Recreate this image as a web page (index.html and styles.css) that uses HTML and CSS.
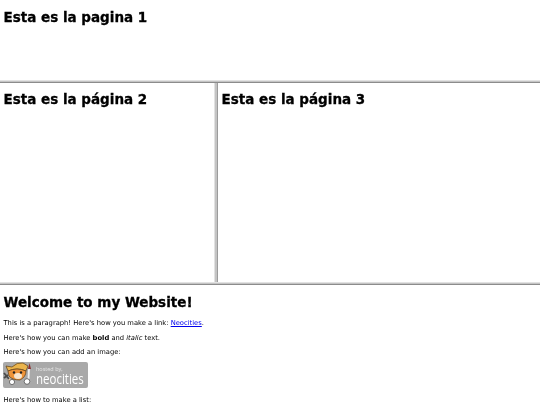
FILE: index.html
```html
<!DOCTYPE html>
<html lang="es">
<head>
<meta charset="utf-8">
<title>Frames</title>
<link rel="stylesheet" href="styles.css">
</head>
<body>
<section class="pane top"><h1>Esta es la pagina 1</h1></section>
<div class="rule-h"></div>
<div class="middle">
  <section class="pane left"><h1>Esta es la página 2</h1></section>
  <div class="rule-v"></div>
  <section class="pane right"><h1>Esta es la página 3</h1></section>
</div>
<div class="rule-h"></div>
<section class="pane bottom">
  <h1 class="welcome">Welcome to my Website!</h1>
  <p>This is a paragraph! Here's how you make a link: <a href="#">Neocities</a>.</p>
  <p>Here's how you can make <b>bold</b> and <i>italic</i> text.</p>
  <p>Here's how you can add an image:</p>
  <div class="badge">
    <svg class="cat" width="32" height="26" viewBox="0 0 32 26">
      <path d="M1 11 L6 17 M1 16 L5 13" stroke="#4a4a4a" stroke-width="1.8" fill="none"/>
      <path d="M6 17 L9 19" stroke="#e9c9a0" stroke-width="2"/>
      <circle cx="9" cy="20" r="2.6" fill="#fff" stroke="#444" stroke-width=".7"/>
      <path d="M5 9 L3 4 L9 5 Q14 0 20 1 L25 4 L23 9 Q14 5 5 9Z" fill="#eab44c" stroke="#5a3d18" stroke-width=".7"/>
      <path d="M5 9 Q14 5 23 9 Q23 15 17 18 Q9 18 6 14Z" fill="#ef9438" stroke="#5a3d18" stroke-width=".7"/>
      <ellipse cx="15" cy="14" rx="4" ry="3" fill="#f7e6d0"/>
      <circle cx="11" cy="10.5" r="1.2" fill="#222"/>
      <circle cx="18" cy="10.5" r="1.2" fill="#222"/>
      <path d="M26 7 L25.5 17" stroke="#eee" stroke-width="1.8"/>
      <path d="M26.5 1 L28 7 L25 7Z" fill="#8d3030"/>
      <circle cx="24" cy="19.5" r="2.8" fill="#fff" stroke="#444" stroke-width=".7"/>
    </svg>
    <div class="badge-text">
      <span class="hosted">hosted by,</span>
      <span class="neo">neocities</span>
    </div>
  </div>
  <p class="list-intro">Here's how to make a list:</p>
</section>
</body>
</html>
```
FILE: styles.css
```css
html, body {
  margin: 0;
  padding: 0;
  width: 540px;
  height: 405px;
  overflow: hidden;
  background: #fff;
}
body {
  font-family: "DejaVu Sans", sans-serif;
  font-size: 6.75px;
  color: #000;
  filter: blur(0.3px);
}
.pane { overflow: hidden; padding: 0 3.5px; box-sizing: border-box; }
h1 { margin: 0; font-size: 13.5px; line-height: 16px; font-weight: bold; -webkit-text-stroke: 0.3px #000; }
.top { height: 80px; padding-top: 9px; }
.rule-h {
  height: 1px;
  background: #c4c4c4;
  border-top: 1px solid #e2e2e2;
  border-bottom: 1px solid #8c8c8c;
}
.middle { display: flex; height: 199px; }
.left { width: 214px; padding-top: 8px; }
.right { flex: 1; padding-top: 8px; }
.rule-v {
  width: 2px;
  background: #c4c4c4;
  border-left: 1px solid #e2e2e2;
  border-right: 1px solid #9c9c9c;
}
.bottom { height: 120px; padding-top: 9px; }
.welcome { margin-bottom: 9px; }
p { margin: 0 0 6.5px; line-height: 8px; }
a { color: #00e; text-decoration: underline; }
.badge {
  display: flex;
  align-items: center;
  width: 85px;
  height: 26px;
  margin: -0.5px 0 8px -0.5px;
  background: #a9a9a9;
  border-radius: 2px;
}
.badge-text { display: flex; flex-direction: column; color: #fff; margin-left: 1px; }
.hosted { font-family: "Open Sans", sans-serif; font-size: 5.5px; line-height: 6px; color: #e6e6e6; }
.neo { font-family: "Open Sans", sans-serif; font-size: 11.5px; line-height: 13px; transform: scaleY(1.25); transform-origin: left center; }
```
